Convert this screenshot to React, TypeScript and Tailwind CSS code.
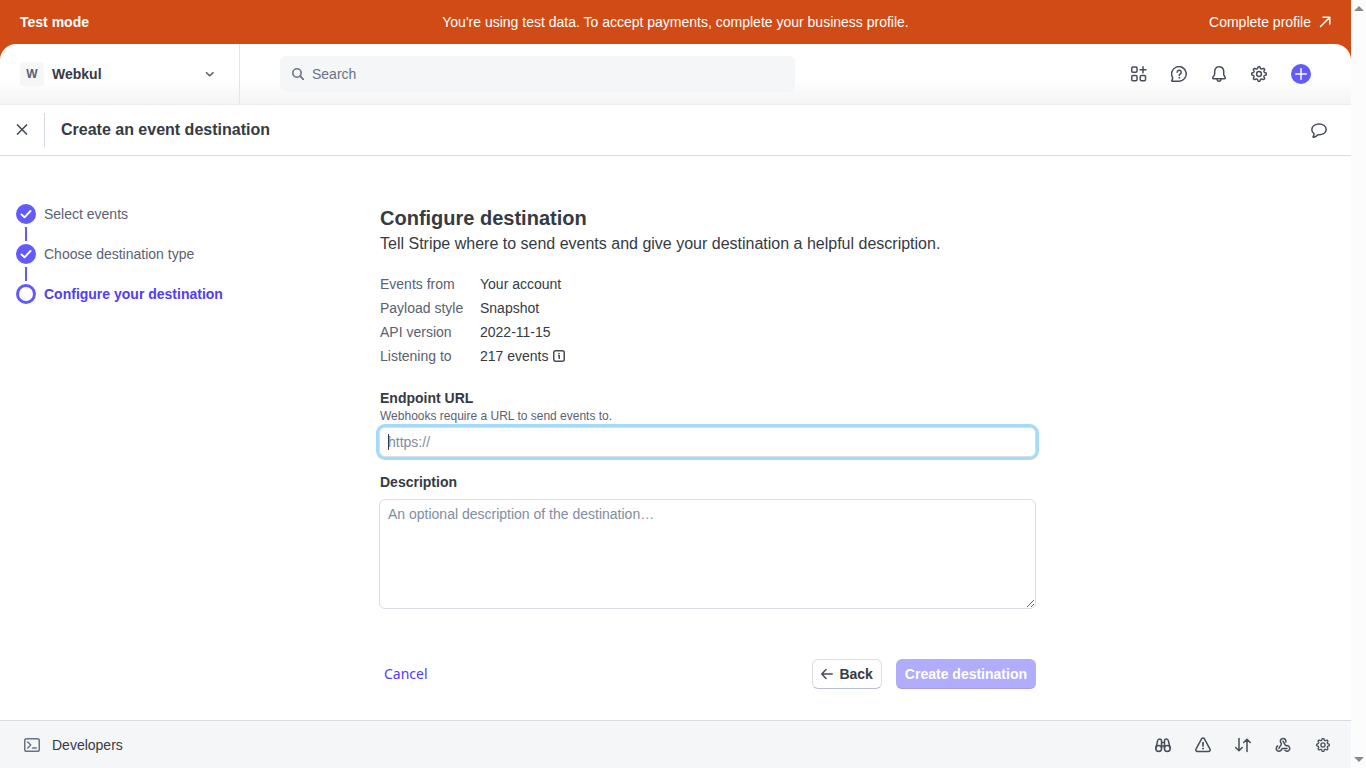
import type { ReactNode } from "react";

type IconProps = { children: ReactNode; className?: string; box?: string };

function Icon({ children, className = "size-4", box = "0 0 16 16" }: IconProps) {
  return (
    <svg
      viewBox={box}
      className={className}
      fill="none"
      stroke="currentColor"
      strokeWidth="1.5"
      strokeLinecap="round"
      strokeLinejoin="round"
      aria-hidden="true"
    >
      {children}
    </svg>
  );
}

// Outline of a cog with eight rounded teeth, centred in a 16-unit box.
const gearOutline =
  Array.from({ length: 160 }, (_, i) => {
    const angle = (i / 160) * Math.PI * 2;
    const radius = 6.4 + 0.9 * Math.tanh(2 * Math.cos(8 * angle));
    const x = 8 + radius * Math.sin(angle);
    const y = 8 - radius * Math.cos(angle);
    return `${i === 0 ? "M" : "L"}${x.toFixed(2)} ${y.toFixed(2)}`;
  }).join("") + "Z";

function Gear({ className }: { className?: string }) {
  return (
    <Icon className={className}>
      <path d={gearOutline} />
      <circle cx="8" cy="8" r="2.4" />
    </Icon>
  );
}

const steps = [
  { label: "Select events", done: true },
  { label: "Choose destination type", done: true },
  { label: "Configure your destination", done: false },
];

const details = [
  ["Events from", "Your account"],
  ["Payload style", "Snapshot"],
  ["API version", "2022-11-15"],
  ["Listening to", "217 events"],
];

function Banner() {
  return (
    <div className="grid h-11 shrink-0 grid-cols-[1fr_auto_1fr] items-center px-5 text-white">
      <strong className="font-bold">Test mode</strong>
      <span>You're using test data. To accept payments, complete your business profile.</span>
      <a href="#profile" className="flex items-center gap-2 justify-self-end">
        Complete profile
        <Icon className="size-3" box="0 0 12 12">
          <path d="M1.5 10.5 10.5 1.5M4 1.25h6.75V8" />
        </Icon>
      </a>
    </div>
  );
}

function TopBar() {
  return (
    <header className="flex h-15 shrink-0 rounded-t-2xl bg-linear-to-b from-white from-60% to-[#f4f4f4]">
      <button type="button" className="flex w-60 items-center gap-2 border-r border-[#e3e5e8] pr-6 pl-5 font-bold">
        <span className="flex size-6 items-center justify-center rounded bg-[#f5f6f8] text-xs text-[#596171]">W</span>
        <span className="flex-1 text-left">Webkul</span>
        <Icon className="size-3 text-[#596171]" box="0 0 12 12">
          <path d="m3.5 4.75 3.25 3 3.25-3" strokeWidth="1.7" />
        </Icon>
      </button>
      <div className="my-3 ml-10 flex h-9 w-[515px] items-center gap-2 rounded-md bg-[#f5f6f8] px-3">
        <Icon className="size-3 text-[#687385]" box="0 0 12 12">
          <circle cx="5" cy="5" r="4.2" strokeWidth="1.6" />
          <path d="m8.2 8.2 3.1 3.1" strokeWidth="1.7" />
        </Icon>
        <input
          type="search"
          aria-label="Search"
          placeholder="Search"
          className="min-w-0 flex-1 bg-transparent outline-none placeholder:text-[#687385]"
        />
      </div>
      <nav className="ml-auto flex items-center gap-6 pr-10 text-[#474e5a]">
        <button type="button" aria-label="Apps">
          <Icon>
            <rect x=".75" y="1" width="5.3" height="5.3" rx="1.2" />
            <rect x=".75" y="9.5" width="5.3" height="5.3" rx="1.2" />
            <rect x="9.25" y="9.5" width="5.3" height="5.3" rx="1.2" />
            <path d="M12 .75v6M9 3.7h6" />
          </Icon>
        </button>
        <button type="button" aria-label="Help">
          <Icon>
            <path d="M1.4 15.2c-.6 0-.8-.5-.5-.9.6-.8.9-1.7.7-2.7A7.3 7.3 0 1 1 8.3 15.2Z" />
            <path d="M6.2 6.3a2 2 0 1 1 3 1.7c-.7.4-1 .7-1 1.4" />
            <circle cx="8.2" cy="11.8" r=".5" fill="currentColor" strokeWidth=".8" />
          </Icon>
        </button>
        <button type="button" aria-label="Notifications">
          <Icon>
            <path d="M8 .8a4.3 4.3 0 0 0-4.3 4.3v2.7c0 1.2-.6 2-1.5 3-.8.9-.6 1.9.4 1.9h10.800c1 0 1.200-1 .4-1.900-.9-1-1.100-1.800-1.100-3V5.100A4.300 4.300 0 0 0 8 .8Z" />
            <path d="M6 13c.1 1.4.9 2.2 2 2.2s1.9-.8 2-2.2" />
          </Icon>
        </button>
        <button type="button" aria-label="Settings">
          <Gear className="size-4" />
        </button>
        <button
          type="button"
          aria-label="Create"
          className="flex size-5 items-center justify-center rounded-full bg-[#625afa] text-white"
        >
          <Icon className="size-3" box="0 0 12 12">
            <path d="M6 .75v10.5M.75 6h10.5" />
          </Icon>
        </button>
      </nav>
    </header>
  );
}

function Stepper() {
  return (
    <ol className="flex w-[364px] shrink-0 flex-col pt-12 pl-4">
      {steps.map((step, i) => (
        <li key={step.label}>
          {i > 0 && <div className="mx-[9px] my-[3px] h-3.5 w-0.5 bg-[#625afa]" />}
          <div className="flex h-5 items-center gap-2">
            {step.done ? (
              <span className="flex size-5 items-center justify-center rounded-full bg-[#625afa] text-white">
                <Icon className="size-3" box="0 0 12 12">
                  <path d="m1.5 6.5 3 2.8 6-6.3" strokeWidth="1.9" />
                </Icon>
              </span>
            ) : (
              <span className="size-5 rounded-full border-3 border-[#625afa]" />
            )}
            <span className={step.done ? "text-[#596171]" : "font-bold text-[#513df5]"}>{step.label}</span>
          </div>
        </li>
      ))}
    </ol>
  );
}

function DestinationForm() {
  return (
    <form className="ml-[15px] w-[657px] pt-12" onSubmit={(e) => e.preventDefault()}>
      <div className="px-px">
        <h2 className="text-xl leading-7 font-bold">Configure destination</h2>
        <p className="text-base leading-6">
          Tell Stripe where to send events and give your destination a helpful description.
        </p>
        <dl className="mt-4 grid grid-cols-[100px_1fr] leading-6">
          {details.map(([name, value]) => (
            <div key={name} className="contents">
              <dt className="text-[#596171]">{name}</dt>
              <dd className="flex items-center gap-1">
                {value}
                {name === "Listening to" && (
                  <button type="button" aria-label="Event list" className="text-[#474e5a]">
                    <Icon className="size-3" box="0 0 12 12">
                      <rect x=".75" y=".75" width="10.5" height="10.5" rx="2" />
                      <path d="M5 5.5h1.25V9" strokeLinecap="butt" />
                      <circle cx="6" cy="3.5" r=".5" fill="currentColor" strokeWidth=".6" />
                    </Icon>
                  </button>
                )}
              </dd>
            </div>
          ))}
        </dl>
      </div>
      <label htmlFor="endpoint" className="mt-5 block px-px font-bold">
        Endpoint URL
      </label>
      <p id="endpoint-help" className="px-px text-xs leading-4 text-[#596171]">
        Webhooks require a URL to send events to.
      </p>
      <div className="relative mt-[3px]">
        <input
          id="endpoint"
          type="url"
          autoFocus
          aria-describedby="endpoint-help"
          placeholder="https://"
          className="block h-[30px] w-full rounded-md border border-[#d8dee4] bg-white px-2 caret-transparent outline-none placeholder:text-[#818da0] focus:ring-3 focus:ring-[#a6dbf7]"
        />
        <span aria-hidden="true" className="pointer-events-none absolute top-[7px] left-[9px] h-4 w-px bg-[#353a44]" />
      </div>
      <label htmlFor="description" className="mt-[15px] block px-px font-bold">
        Description
      </label>
      <textarea
        id="description"
        placeholder="An optional description of the destination…"
        className="mt-[7px] block h-[110px] w-full resize rounded-md border border-[#d8dee4] bg-white px-2 py-1 outline-none placeholder:text-[#818da0]"
      />
      <div className="mt-[50px] flex items-center gap-3.5">
        <button type="button" className="mr-auto px-[5px] font-['Noto_Sans',sans-serif] text-[#513df5]">
          Cancel
        </button>
        <button
          type="button"
          className="flex h-[30px] items-center gap-1.5 rounded-md border border-[#d8dee4] border-b-[#b9bfc9] px-2 font-bold"
        >
          <Icon className="size-3 text-[#474e5a]" box="0 0 12 12">
            <path d="M11.25 6H.75M5 1.5.75 6 5 10.5" />
          </Icon>
          Back
        </button>
        <button type="submit" disabled className="h-[30px] rounded-md border-b border-[#a39ceb] bg-[#b1acfc] px-[9px] font-bold text-white">
          Create destination
        </button>
      </div>
    </form>
  );
}

function DeveloperBar() {
  return (
    <footer className="flex h-12 shrink-0 items-center border-t border-[#d5dbe1] bg-[#f5f6f8] pr-5 pl-6">
      <button type="button" className="flex items-center gap-3">
        <Icon className="size-4 text-[#687385]">
          <rect x=".75" y="1.75" width="14.5" height="12.5" rx="1.8" />
          <path d="m3.75 5 3 3-3 3M8.5 11h3.75" />
        </Icon>
        Developers
      </button>
      <nav className="ml-auto flex items-center gap-6 text-[#474e5a]">
        <button type="button" aria-label="Inspector">
          <Icon>
            <circle cx="3.7" cy="11.5" r="2.9" />
            <circle cx="12.3" cy="11.5" r="2.9" />
            <path d="M.8 11.2 2.6 4c.2-1.2.9-2 2-2s1.9.8 1.9 2v7M15.2 11.2 13.4 4c-.2-1.2-.9-2-2-2s-1.900.8-1.900 2v7M6.500 5.500h3M6.500 9h3" />
          </Icon>
        </button>
        <button type="button" aria-label="Errors">
          <Icon>
            <path d="M6.7 1.7a1.500 1.500 0 0 1 2.600 0l5.700 10.400a1.600 1.600 0 0 1-1.400 2.400H2.400A1.600 1.600 0 0 1 1 12.100Z" />
            <path d="M8 5.5V9" strokeWidth="1.7" />
            <circle cx="8" cy="11.6" r=".6" fill="currentColor" strokeWidth=".9" />
          </Icon>
        </button>
        <button type="button" aria-label="API requests">
          <Icon>
            <path d="M4 1.5v12M.75 10.5 4 13.75l3.25-3.25M12 14.5v-12M8.75 5.5 12 2.25l3.25 3.25" />
          </Icon>
        </button>
        <button type="button" aria-label="Webhooks">
          <Icon>
            <path d="M3.9 11.4 6.3 7.3c.3-.6 0-1-.5-1.500A2.800 2.800 0 1 1 10.800 5" />
            <path d="m8 4.200 2.300 4c.3.500.9.500 1.700.4a2.800 2.800 0 1 1-2.100 4.700" />
            <path d="M12 11.400H7.900c-.7 0-1 .4-1.200.9A2.800 2.800 0 1 1 2.600 9" />
          </Icon>
        </button>
        <button type="button" aria-label="Developer settings" className="flex size-4 items-center justify-center">
          <Gear className="size-3.5" />
        </button>
      </nav>
    </footer>
  );
}

export default function App() {
  return (
    <div className="flex h-screen overflow-hidden bg-white font-['Liberation_Sans',Arial,sans-serif] text-sm leading-5 text-[#353a44]">
      <div className="flex min-w-0 flex-1 flex-col bg-[#d04b15]">
        <Banner />
        <TopBar />
        <main className="flex min-h-0 flex-1 flex-col bg-white">
          <div className="flex h-[52px] shrink-0 items-center border-y border-t-[#ebeef1] border-b-[#d5dbe1] pr-6 pl-4">
            <button type="button" aria-label="Close" className="text-[#474e5a]">
              <Icon className="size-3" box="0 0 12 12">
                <path d="m1.5 1 9 9M10.5 1l-9 9" strokeWidth="1.7" />
              </Icon>
            </button>
            <h1 className="ml-4 flex h-[34px] items-center border-l border-[#d5dbe1] pl-4 text-base font-bold">
              Create an event destination
            </h1>
            <button type="button" aria-label="Send feedback" className="ml-auto text-[#474e5a]">
              <Icon>
                <path d="M8.2 1.9C4 1.9.8 4.3.8 7.4c0 1.7.8 3.1 2.1 4.1.3 1.1-.1 2.1-.8 3.1-.2.5 0 .8.5.7 1.9-.3 3.3-1.3 4.2-2.5h1.400c4 0 7-2.300 7-5.400s-3.100-5.500-7-5.500Z" />
              </Icon>
            </button>
          </div>
          <div className="flex flex-1 overflow-hidden">
            <Stepper />
            <DestinationForm />
          </div>
        </main>
        <DeveloperBar />
      </div>
      <div aria-hidden="true" className="flex w-[15px] shrink-0 flex-col items-center justify-between bg-[#fcfcfc] py-1.5 text-[#8a8a8a]">
        <svg viewBox="0 0 10 5" className="h-[5px] w-2.5" fill="currentColor">
          <path d="M0 5 5 0l5 5Z" />
        </svg>
        <svg viewBox="0 0 10 5" className="h-[5px] w-2.5" fill="currentColor">
          <path d="m0 0 5 5 5-5Z" />
        </svg>
      </div>
    </div>
  );
}
